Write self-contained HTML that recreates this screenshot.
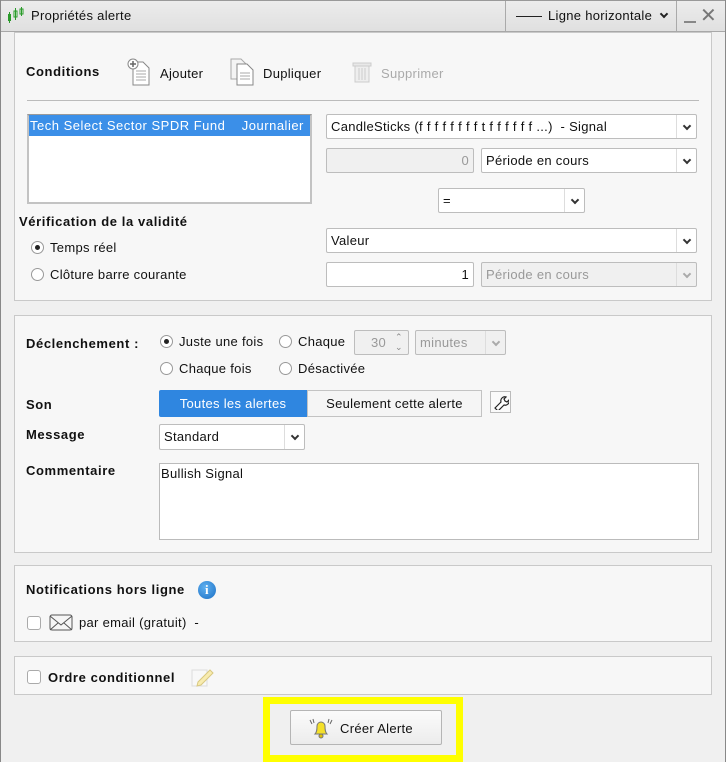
<!DOCTYPE html>
<html><head><meta charset="utf-8"><style>
*{box-sizing:border-box;margin:0;padding:0}
body{width:726px;height:762px;background:#f0f0f0;font-family:"Liberation Sans",sans-serif;font-size:13px;color:#111;position:relative;overflow:hidden;letter-spacing:0.3px}
.a{position:absolute}
.panel{position:absolute;left:14px;width:698px;background:#f7f7f7;border:1px solid #c9c9c9}
.b{font-weight:bold;letter-spacing:0.6px}
.sel{position:absolute;background:#fff;border:1px solid #bdbdbd;border-radius:2px;height:25px;line-height:23px;padding-left:4px;white-space:nowrap}
.sel.dd::after{content:"";position:absolute;right:0;top:0;bottom:0;width:19px;border-left:1px solid #ddd}
.sel i{position:absolute;right:6px;top:8px;width:6px;height:6px;border-right:2px solid #333;border-bottom:2px solid #333;transform:rotate(45deg)}
.dis{background:#f0f0f0;color:#999}
.dis i{border-color:#aaa}
.rad{position:absolute;width:13px;height:13px;border:1px solid #999;border-radius:50%;background:#fff}
.rad.on::after{content:"";position:absolute;left:3px;top:3px;width:5px;height:5px;border-radius:50%;background:#222}
.chk{position:absolute;width:14px;height:14px;border:1px solid #aaa;border-radius:3px;background:#fff}
</style></head><body>
<div class="a" style="left:0;top:0;width:726px;height:32px;background:linear-gradient(#ececec,#e0e0e0);border-bottom:1px solid #a8a8a8;border-top:1px solid #999"></div>
<div class="a" style="left:0;top:0;width:1px;height:762px;background:#888"></div>
<div class="a" style="right:0;top:0;width:1px;height:762px;background:#888"></div>
<svg class="a" style="left:7px;top:7px" width="18" height="16"><rect x="1" y="7" width="3" height="7" fill="#2a9a2a"/><line x1="2.5" y1="5" x2="2.5" y2="16" stroke="#2a9a2a"/><rect x="7" y="4" width="3" height="6" fill="#fff" stroke="#2a9a2a"/><line x1="8.5" y1="1" x2="8.5" y2="13" stroke="#2a9a2a"/><rect x="13" y="2" width="3" height="5" fill="#fff" stroke="#2a9a2a"/><line x1="14.5" y1="0" x2="14.5" y2="9" stroke="#2a9a2a"/></svg>
<div class="a" style="left:31px;top:8px">Propriétés alerte</div>
<div class="a" style="left:505px;top:1px;width:1px;height:30px;background:#aaa"></div>
<div class="a" style="left:676px;top:1px;width:1px;height:30px;background:#aaa"></div>
<div class="a" style="left:516px;top:16px;width:26px;height:1px;background:#222"></div>
<div class="a" style="left:548px;top:8px">Ligne horizontale</div>
<div class="a" style="left:661px;top:11px;width:6px;height:6px;border-right:2px solid #222;border-bottom:2px solid #222;transform:rotate(45deg)"></div>
<div class="a" style="left:684px;top:21px;width:12px;height:2px;background:#888"></div>
<div class="a" style="left:700px;top:3px;font-size:20px;color:#777">✕</div>

<div class="panel" style="top:32px;height:269px"></div>
<div class="a b" style="left:26px;top:64px">Conditions</div>
<svg class="a" style="left:127px;top:58px" width="26" height="28"><path d="M6 4h10l6 6v17H6z" fill="#fff" stroke="#888"/><path d="M9 13h10M9 16h10M9 19h10M9 22h10" stroke="#aaa"/><circle cx="6" cy="6" r="5" fill="#fff" stroke="#888"/><path d="M6 3v6M3 6h6" stroke="#666" stroke-width="1.5"/></svg>
<div class="a" style="left:160px;top:66px">Ajouter</div>
<svg class="a" style="left:229px;top:58px" width="30" height="28"><path d="M2 1h10l5 5v15H2z" fill="#f4f4f4" stroke="#aaa"/><path d="M8 6h10l6 6v15H8z" fill="#fff" stroke="#888"/><path d="M11 15h10M11 18h10M11 21h10" stroke="#aaa"/></svg>
<div class="a" style="left:263px;top:66px">Dupliquer</div>
<svg class="a" style="left:352px;top:60px" width="20" height="24"><rect x="3" y="5" width="14" height="17" fill="#eee" stroke="#ccc"/><rect x="1" y="3" width="18" height="3" fill="#e8e8e8" stroke="#ccc"/><path d="M7 8v12M10 8v12M13 8v12" stroke="#ccc"/></svg>
<div class="a" style="left:381px;top:66px;color:#aaa">Supprimer</div>
<div class="a" style="left:27px;top:100px;width:672px;height:1px;background:#bbb"></div>

<div class="a" style="left:27px;top:114px;width:285px;height:90px;background:#fff;border:2px solid #c3c3c3;border-top-color:#999"></div>
<div class="a" style="left:29px;top:115px;width:281px;height:21px;background:#3b8fe8;color:#fff;line-height:21px;padding-left:1px;white-space:nowrap;letter-spacing:0.5px">Tech Select Sector SPDR Fund&nbsp;&nbsp;&nbsp; Journalier</div>
<div class="sel dd" style="left:326px;top:114px;width:371px">CandleSticks (f f f f f f f f t f f f f f f ...)&nbsp; - Signal<i></i></div>
<div class="sel dis" style="left:326px;top:148px;width:148px;text-align:right;padding-right:4px">0</div>
<div class="sel dd" style="left:481px;top:148px;width:216px">Période en cours<i></i></div>
<div class="sel dd" style="left:438px;top:188px;width:147px">=<i></i></div>
<div class="a b" style="left:19px;top:214px">Vérification de la validité</div>
<div class="rad on" style="left:31px;top:241px"></div>
<div class="a" style="left:50px;top:240px">Temps réel</div>
<div class="rad" style="left:31px;top:268px"></div>
<div class="a" style="left:50px;top:267px">Clôture barre courante</div>
<div class="sel dd" style="left:326px;top:228px;width:371px">Valeur<i></i></div>
<div class="sel" style="left:326px;top:262px;width:148px;text-align:right;padding-right:4px">1</div>
<div class="sel dd dis" style="left:481px;top:262px;width:216px">Période en cours<i></i></div>

<div class="panel" style="top:315px;height:238px"></div>
<div class="a b" style="left:26px;top:336px">Déclenchement :</div>
<div class="rad on" style="left:160px;top:335px"></div>
<div class="a" style="left:179px;top:334px">Juste une fois</div>
<div class="rad" style="left:279px;top:335px"></div>
<div class="a" style="left:298px;top:334px">Chaque</div>
<div class="sel dis" style="left:354px;top:330px;width:55px;text-align:right;padding-right:22px">30</div>
<div class="a" style="left:395px;top:332px;font-size:9px;color:#888;line-height:10px">⌃<br>⌄</div>
<div class="sel dd dis" style="left:415px;top:330px;width:91px">minutes<i></i></div>
<div class="rad" style="left:160px;top:362px"></div>
<div class="a" style="left:179px;top:361px">Chaque fois</div>
<div class="rad" style="left:279px;top:362px"></div>
<div class="a" style="left:298px;top:361px">Désactivée</div>
<div class="a b" style="left:26px;top:397px">Son</div>
<div class="a" style="left:159px;top:390px;width:148px;height:27px;background:#2f86e0;color:#fff;text-align:center;line-height:27px;border-radius:2px 0 0 2px">Toutes les alertes</div>
<div class="a" style="left:307px;top:390px;width:175px;height:27px;background:#f5f5f5;border:1px solid #c3c3c3;text-align:center;line-height:25px">Seulement cette alerte</div>
<div class="a" style="left:490px;top:391px;width:21px;height:22px;border:1px solid #bbb;background:#fafafa"></div>
<svg class="a" style="left:493px;top:394px" width="16" height="16"><path d="M2 14l6-6a4 4 0 0 1 5-5l-2 2 1 2 2 1 2-2a4 4 0 0 1-5 5l-6 6z" fill="#fff" stroke="#222" stroke-width="1.2"/></svg>
<div class="a b" style="left:26px;top:427px">Message</div>
<div class="sel dd" style="left:159px;top:424px;width:146px;height:26px">Standard<i></i></div>
<div class="a b" style="left:26px;top:463px">Commentaire</div>
<div class="a" style="left:159px;top:463px;width:540px;height:77px;background:#fff;border:1px solid #bbb;padding:2px 1px">Bullish Signal</div>

<div class="panel" style="top:565px;height:77px"></div>
<div class="a b" style="left:26px;top:582px">Notifications hors ligne</div>
<div class="a" style="left:198px;top:581px;width:18px;height:18px;border-radius:50%;background:radial-gradient(circle at 40% 35%,#5fb0f0,#1b6fc4);color:#fff;font-weight:bold;font-size:13px;text-align:center;line-height:18px;font-family:'Liberation Serif',serif">i</div>
<div class="chk" style="left:27px;top:616px"></div>
<svg class="a" style="left:49px;top:614px" width="24" height="18"><rect x="1" y="1" width="22" height="15" rx="2" fill="#f6f6f6" stroke="#555"/><path d="M1 2l11 9 11-9M1 16l8-7M23 16l-8-7" fill="none" stroke="#555"/></svg>
<div class="a" style="left:79px;top:615px">par email (gratuit)&nbsp; -</div>

<div class="panel" style="top:656px;height:39px"></div>
<div class="chk" style="left:27px;top:670px"></div>
<div class="a b" style="left:48px;top:670px">Ordre conditionnel</div>
<svg class="a" style="left:190px;top:664px" width="24" height="24"><rect x="2" y="6" width="15" height="16" fill="#f8f8f8" stroke="#ddd"/><path d="M8 18l12-12 3 3-12 12-4 1z" fill="#f8ecb0" stroke="#d8c880"/></svg>

<div class="a" style="left:263px;top:697px;width:200px;height:65px;border:7px solid #ffff00"></div>
<div class="a" style="left:290px;top:710px;width:152px;height:35px;background:linear-gradient(#fbfbfb,#ececec);border:1px solid #b5b5b5;border-radius:2px"></div>
<svg class="a" style="left:307px;top:716px" width="28" height="24"><path d="M8 18c2-2 2-5 2-8a4 4 0 0 1 8 0c0 3 0 6 2 8z" fill="#f4e02a" stroke="#777"/><circle cx="14" cy="20" r="2" fill="#e0c000" stroke="#777"/><path d="M3 4l2 4M6 3l1 4M25 4l-2 4M22 3l-1 4" stroke="#666"/></svg>
<div class="a" style="left:340px;top:721px">Créer Alerte</div>
</body></html>
